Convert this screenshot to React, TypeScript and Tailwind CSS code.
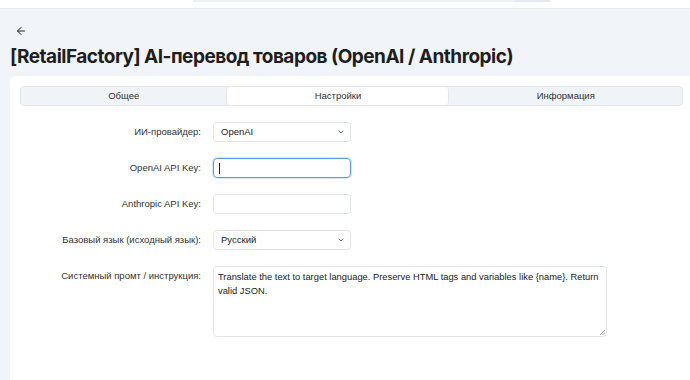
import React from "react";

export default function App() {
  const font = { fontFamily: "'Liberation Sans', Arial, sans-serif" };
  return (
    <div className="w-[690px] h-[380px] overflow-hidden bg-[#f1f4f8] text-[#222]" style={font}>
      <div className="h-[9px] bg-white border-b border-[#e6eaf0] flex">
        <div className="ml-[193px] w-[322px] h-[2px] bg-[#edf0f4]" />
        <div className="w-[35px] h-[2px] bg-[#e6eaf0]" />
      </div>
      <div className="pl-[10px]">
        <div className="h-[18px] mt-[13px] flex items-center pl-[5px]">
          <svg width="12" height="12" viewBox="0 0 24 24" fill="none" stroke="#222" strokeWidth="2" strokeLinecap="round" strokeLinejoin="round">
            <path d="M19 12H5" />
            <path d="M12 19l-7-7 7-7" />
          </svg>
        </div>
        <h1
          className="text-[19px] leading-[24px] font-bold mt-[5px] tracking-[-0.5px] text-[#1e1e1e]"
          style={{ fontFamily: "Inter, 'Noto Sans', sans-serif" }}
        >
          [RetailFactory] AI-перевод товаров (OpenAI / Anthropic)
        </h1>
        <div className="mt-[7px] bg-white rounded-tl-[6px] h-[400px] pl-[10px] pt-[10px] pr-[7px]">
          <div className="flex h-[20px] bg-[#f0f3f7] border border-[#e4e8ee] rounded-[4px] text-[9.5px] text-[#333]">
            <div className="flex-auto flex items-center justify-center">Общее</div>
            <div className="flex-auto flex items-center justify-center bg-white rounded-[4px] border border-[#e4e8ee] -my-px">Настройки</div>
            <div className="flex-auto flex items-center justify-center">Информация</div>
          </div>
          <div className="mt-[16px] flex flex-col gap-[16px] text-[9.5px] text-[#333]">
            <div className="flex items-center">
              <div className="w-[181px] text-right">ИИ-провайдер:</div>
              <div className="ml-[12px] w-[138px] h-[20px] border border-[#e2e6ec] rounded-[4px] flex items-center justify-between pl-[7px] pr-[5px] text-[#222]">
                <span>OpenAI</span>
                <svg width="8" height="8" viewBox="0 0 24 24" fill="none" stroke="#555" strokeWidth="2.5" strokeLinecap="round" strokeLinejoin="round">
                  <path d="M6 9l6 6 6-6" />
                </svg>
              </div>
            </div>
            <div className="flex items-center">
              <div className="w-[181px] text-right">OpenAI API Key:</div>
              <div className="ml-[12px] w-[138px] h-[20px] border border-[#5b9be6] rounded-[4px] shadow-[0_0_0_1px_rgba(91,155,230,0.25)] flex items-center pl-[5px]">
                <div className="w-px h-[11px] bg-[#222]" />
              </div>
            </div>
            <div className="flex items-center">
              <div className="w-[181px] text-right">Anthropic API Key:</div>
              <div className="ml-[12px] w-[138px] h-[20px] border border-[#e2e6ec] rounded-[4px]" />
            </div>
            <div className="flex items-center">
              <div className="w-[181px] text-right">Базовый язык (исходный язык):</div>
              <div className="ml-[12px] w-[138px] h-[20px] border border-[#e2e6ec] rounded-[4px] flex items-center justify-between pl-[7px] pr-[5px] text-[#222]">
                <span>Русский</span>
                <svg width="8" height="8" viewBox="0 0 24 24" fill="none" stroke="#555" strokeWidth="2.5" strokeLinecap="round" strokeLinejoin="round">
                  <path d="M6 9l6 6 6-6" />
                </svg>
              </div>
            </div>
            <div className="flex items-start">
              <div className="w-[181px] text-right pt-[3px]">Системный промт / инструкция:</div>
              <div className="relative ml-[12px] w-[394px] h-[71px] border border-[#e2e6ec] rounded-[4px] px-[4px] py-[3px] text-[9.35px] text-[#222] leading-[14px]">
                Translate the text to target language. Preserve HTML tags and variables like {"{name}"}. Return valid JSON.
                <svg className="absolute right-[1px] bottom-[1px]" width="6" height="6" viewBox="0 0 6 6" stroke="#999" strokeWidth="0.8">
                  <path d="M1 6L6 1M3.5 6L6 3.5" />
                </svg>
              </div>
            </div>
          </div>
        </div>
      </div>
    </div>
  );
}
